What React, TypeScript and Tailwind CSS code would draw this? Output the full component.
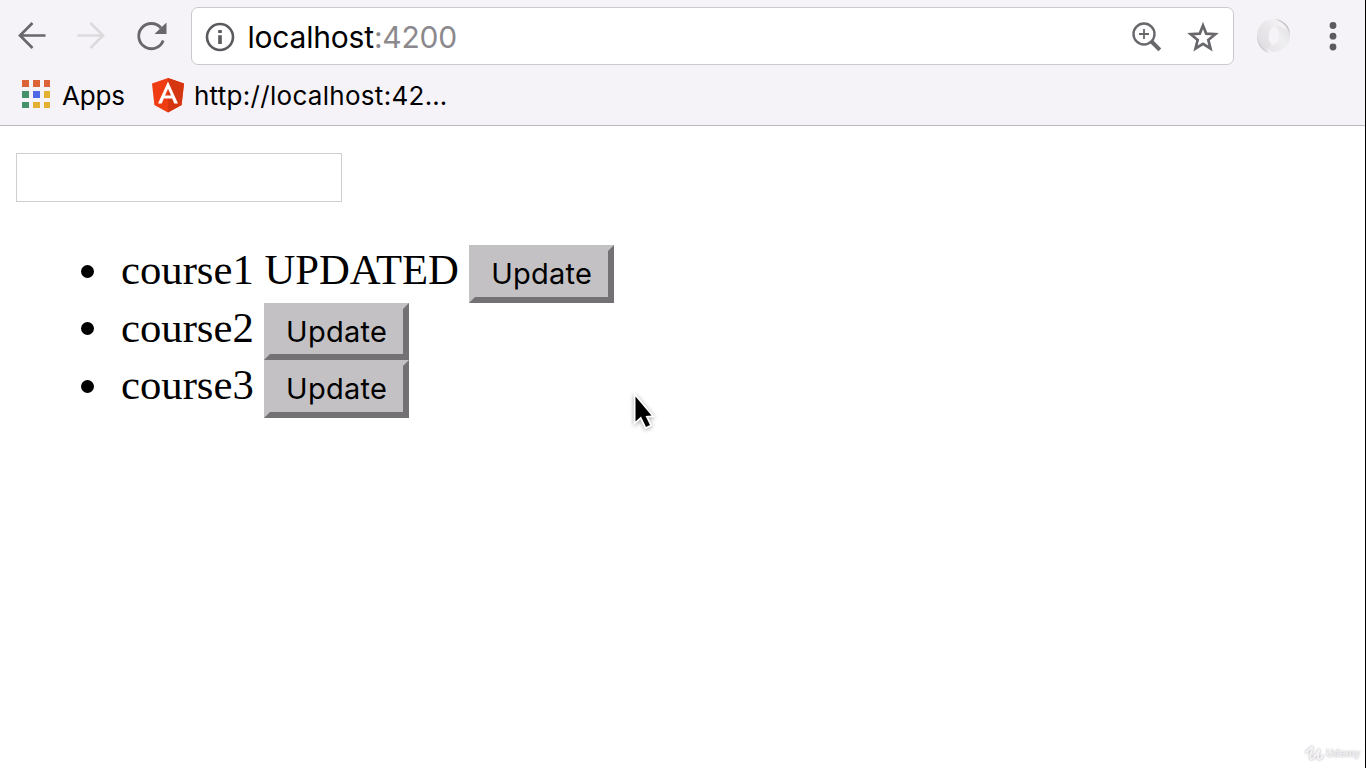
const courses = ['course1 UPDATED', 'course2', 'course3'];
const appColors = ['#dc6238', '#dc6238', '#dc6238', '#45916a', '#5069e4', '#e3b032', '#45916a', '#e3b032', '#e3b032'];

function Back({ flip = false }: { flip?: boolean }) {
  return (
    <svg width="30" height="30" viewBox="0 0 30 30" fill="none" stroke={flip ? '#dcdadd' : '#69676b'} strokeWidth="2.7" className={flip ? '-scale-x-100' : ''}>
      <path d="M29.500 14.500H4M16.500 2 4 14.500 16.500 27" />
    </svg>
  );
}

function Toolbar() {
  return (
    <div className="flex h-[66px] items-start">
      <div className="ml-[16px] mt-[21px] flex">
        <Back />
        <div className="ml-[31px]"><Back flip /></div>
        <svg className="ml-[29px]" width="34" height="32" viewBox="0 0 34 32">
          <path d="M27.200 19.400A12.600 12.600 0 1 1 25 7" fill="none" stroke="#69676b" strokeWidth="2.800" />
          <path d="M30.500 1.400V13H18.500Z" fill="#69676b" />
        </svg>
      </div>
      <div className="ml-[21px] mt-[7px] flex h-[58px] w-[1043px] items-center rounded-[7px] border-[1.5px] border-[#cbc9cd] bg-white">
        <svg className="ml-[13px] mt-[1px] shrink-0" width="30" height="30" viewBox="0 0 30 30">
          <circle cx="15" cy="15" r="13" fill="none" stroke="#5c5a5e" strokeWidth="2.6" />
          <path d="M13.200 8h3.600v3.100h-3.600zM13.200 13.300h3.600v8.800h-3.600z" fill="#5c5a5e" />
        </svg>
        <span className="ml-[12.500px] mt-[2px] whitespace-nowrap text-[30px] leading-[40px] tracking-[-0.2px] text-black">
          localhost<span className="text-[#8b898d]">:4200</span>
        </span>
        <svg className="ml-auto mt-[1px] shrink-0" width="32" height="32" viewBox="0 0 32 32" fill="none" stroke="#69676b">
          <circle cx="13" cy="13" r="10.500" strokeWidth="2.400" />
          <path d="M13 8v10M8 13h10" strokeWidth="1.800" />
          <path d="m20.500 20.500 8.300 8.300" strokeWidth="4" />
        </svg>
        <svg className="ml-[24px] mr-[14px] mt-[1px] shrink-0" width="32" height="32" viewBox="0 0 32 32">
          <path d="m16 4.500 3.200 8.100 9.100.6-7 5.700 2.200 8.600L16 22.800 8.500 27.500l2.200-8.600-7-5.700 9.100-.6Z" fill="none" stroke="#69676b" strokeWidth="2.700" />
        </svg>
      </div>
      <svg className="ml-[22px] mt-[18px]" width="36" height="36" viewBox="0 0 36 36">
        <defs>
          <linearGradient id="ringA" x1="1" y1="0" x2="0" y2="1">
            <stop stopColor="#dddbdf" /><stop offset=".5" stopColor="#efeef0" /><stop offset="1" stopColor="#e4e2e6" />
          </linearGradient>
          <linearGradient id="ringB" x1="0" y1="1" x2="1" y2="0">
            <stop stopColor="#dcdade" /><stop offset=".5" stopColor="#e8e6e9" /><stop offset="1" stopColor="#f8f7f9" />
          </linearGradient>
        </defs>
        <path d="M18 1C28 2 35 9 34 19c-1 9-8 15-17 15-4-1-7-4-8-8 7 4 14 0 14-8 0-6-2-9-5-9 5-2 5-6 0-8Z" fill="url(#ringA)" />
        <path d="M20 1C9 0 1 8 1 18c0 9 5 15 12 17-3-4-2-7 4-8-6-2-6-16 1-18 6-2 11 1 13 5C30 7 26 3 20 1Z" fill="url(#ringB)" />
        <path d="M19 1c9 1 15 7 15 16-2-8-7-13-15-16Z" fill="#c8c6ca" />
        <path d="M13 35C5 32 1 26 1 18c2 8 6 13 12 17Z" fill="#cfcdd1" />
      </svg>
      <svg className="ml-[35px] mt-[20px]" width="12" height="32" viewBox="0 0 12 32" fill="#5c5a5e">
        <circle cx="6" cy="5.500" r="3.400" /><circle cx="6" cy="16.200" r="3.400" /><circle cx="6" cy="27" r="3.400" />
      </svg>
    </div>
  );
}

function Bookmarks() {
  return (
    <div className="flex h-[59px] items-start text-[26px] leading-[40px] text-black">
      <div className="ml-[22px] mt-[14px] grid grid-cols-3 gap-[4px]">
        {appColors.map((color, i) => <div key={i} className="size-[6.800px]" style={{ backgroundColor: color }} />)}
      </div>
      <span className="ml-[11.500px] mt-[10px] w-[63.500px] whitespace-nowrap tracking-[-0.1px]">Apps</span>
      <svg className="ml-[26px] mt-[11px] shrink-0" width="34" height="36" viewBox="0 0 34 36">
        <path d="M17 1 33 6.500 30.600 28 17 35.500 3.400 28 1 6.500Z" fill="#f03c12" />
        <path d="m17 1 16 5.500L30.600 28 17 35.500Z" fill="#d63511" />
        <path d="m17 4.500-10 22h3.800l2-5h8.400l2 5H27Zm0 7.200 3 6.700h-6Z" fill="#fff" fillRule="evenodd" />
      </svg>
      <span className="ml-[8.500px] mt-[10px] whitespace-nowrap tracking-[0.3px]">http://localhost:42…</span>
    </div>
  );
}

export default function App() {
  return (
    <div className="relative h-[768px] w-[1366px] overflow-hidden border-r border-black bg-white font-['Inter','Liberation_Sans',sans-serif]">
      <header className="h-[126px] border-b border-[#bbb9bd] bg-[#f5f3f7]">
        <Toolbar />
        <Bookmarks />
      </header>
      <main className="pl-[16px] pt-[27px]">
        <input aria-label="Course" className="block h-[49px] w-[326px] border-[1.5px] border-[#cfcfcf] bg-white px-2 text-[29px] outline-none" />
        <ul className="mt-[43.300px] font-['Liberation_Serif',serif] text-[42.700px] text-black">
          {courses.map((course) => (
            <li key={course} className="flex h-[57.600px] items-start">
              <span className="ml-[65px] mt-[19.500px] size-[13px] shrink-0 rounded-full bg-black" />
              <span className="ml-[27px] whitespace-nowrap leading-[50px]">{course}</span>
              <button className="ml-[10.300px] flex h-[57.600px] w-[145px] items-center justify-center border-6 border-t-[#c4c1c4] border-r-[#737174] border-b-[#737174] border-l-[#c4c1c4] bg-[#c4c1c4] font-['Inter','Liberation_Sans',sans-serif] text-[29px] leading-[40px] tracking-[0.25px]">
                Update
              </button>
            </li>
          ))}
        </ul>
      </main>
      <svg className="absolute left-[626px] top-[390px]" width="36" height="46" viewBox="0 0 36 46">
        <path d="M9.500 6.500v25l5.500-5 5 10.500 4-2-4.500-9 6-.5Z" fill="#000" stroke="#fff" strokeWidth="3.500" paintOrder="stroke" className="drop-shadow-[0_1px_2px_rgba(0,0,0,0.35)]" />
      </svg>
      <div className="absolute left-[1304px] top-[743px] flex items-center text-[10px] font-semibold text-[#f2f0f3] [text-shadow:0_0_2px_#aaa6ac]">
        <svg width="21" height="20" viewBox="0 0 21 20" className="drop-shadow-[0_0_1px_#aaa6ac]">
          <path d="M2 9c3-1 5-5 6-5 2 1-4 10-1 12 3 1 7-8 8-9 1 0-3 9 0 9 2 0 3-2 4-3" fill="none" stroke="#f4f2f5" strokeWidth="2.200" strokeLinecap="round" />
        </svg>
        <span className="ml-[1px]">Udemy</span>
      </div>
    </div>
  );
}
